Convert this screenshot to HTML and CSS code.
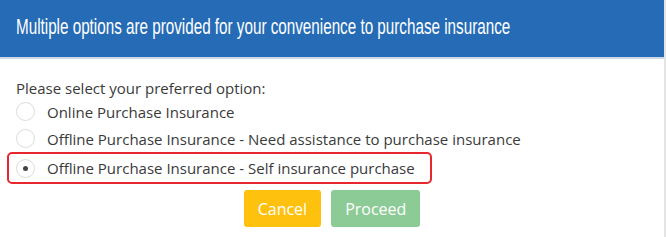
FILE: index.html
```html
<!DOCTYPE html>
<html lang="en">
<head>
    <meta charset="UTF-8">
    <title>Purchase Insurance</title>
    <link rel="stylesheet" href="styles.css">
</head>
<body>
    <div class="modal">
        <div class="modal-header">
            <h2>Multiple options are provided for your convenience to purchase insurance</h2>
        </div>
        <div class="modal-body">
            <p class="prompt">Please select your preferred option:</p>
            <div class="options">
                <label class="option">
                    <span class="radio"></span>
                    Online Purchase Insurance
                </label>
                <label class="option">
                    <span class="radio"></span>
                    Offline Purchase Insurance - Need assistance to purchase insurance
                </label>
                <label class="option selected">
                    <span class="radio checked"></span>
                    Offline Purchase Insurance - Self insurance purchase
                </label>
            </div>
            <div class="button-row">
                <button class="btn btn-cancel">Cancel</button>
                <button class="btn btn-proceed">Proceed</button>
            </div>
        </div>
    </div>
</body>
</html>
```

FILE: styles.css
```css
body {
    margin: 0;
    background-color: #ffffff;
    font-family: 'Open Sans', sans-serif;
    color: #3a3a3a;
}

.modal {
    width: 666px;
    height: 237px;
    box-sizing: border-box;
    border-right: 2px solid #e4e4e4;
    overflow: hidden;
}

.modal-header {
    height: 57px;
    background-color: #256bb5;
    border-bottom: 2px solid #cddaea;
    display: flex;
    align-items: center;
    padding: 0 16px;
}

.modal-header h2 {
    margin: 0;
    font-family: 'Liberation Sans', sans-serif;
    font-weight: normal;
    font-size: 22px;
    color: #ffffff;
    white-space: nowrap;
    transform: scaleX(0.692);
    transform-origin: left center;
    padding-bottom: 3px;
}

.modal-body {
    padding: 19px 16px 0 16px;
}

.prompt {
    margin: 0;
    font-size: 15px;
    line-height: 20px;
}

.options {
    display: flex;
    flex-direction: column;
    align-items: flex-start;
}

.option {
    display: flex;
    align-items: center;
    height: 27px;
    font-size: 15px;
    cursor: pointer;
}

.option.selected {
    height: 28px;
    margin-left: -9px;
    padding: 0 15px 0 7px;
    border: 2px solid #e8262d;
    border-radius: 5px;
}

.radio {
    width: 17px;
    height: 17px;
    border: 1px solid #dcdcdc;
    border-radius: 50%;
    margin-right: 12px;
    display: flex;
    align-items: center;
    justify-content: center;
}

.radio.checked::after {
    content: '';
    width: 5px;
    height: 5px;
    border-radius: 50%;
    background-color: #444444;
}

.button-row {
    display: flex;
    justify-content: center;
    gap: 10px;
    margin-top: 6px;
}

.btn {
    height: 37px;
    padding: 0 14px;
    border: none;
    border-radius: 3px;
    font-family: 'Open Sans', sans-serif;
    font-size: 16px;
    color: #ffffff;
    cursor: pointer;
}

.btn-cancel {
    background-color: #fdc10e;
}

.btn-proceed {
    background-color: #8ccb95;
}
```
